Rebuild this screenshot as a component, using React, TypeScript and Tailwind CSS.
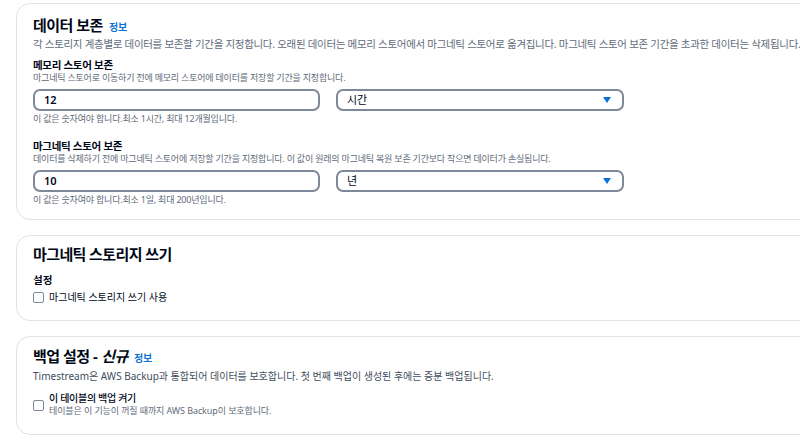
const font = "[font-family:'Noto_Sans','Noto_Sans_CJK_KR',sans-serif]";

function InfoLink() {
  return <span className="ml-[6px] text-[10px] font-bold tracking-normal text-[#0972d3]">정보</span>;
}

function Field({
  label,
  desc,
  value,
  unit,
  hint,
}: {
  label: string;
  desc: string;
  value: string;
  unit: string;
  hint: string;
}) {
  return (
    <div className="flex flex-col">
      <div className="text-[10.5px] font-bold leading-[14px] tracking-[-0.3px] text-[#000716]">{label}</div>
      <div className="whitespace-nowrap text-[9px] leading-[12px] tracking-[-0.2px] text-[#5f6b7a]">{desc}</div>
      <div className="mt-[5px] flex gap-4">
        <div className="flex h-[22px] w-[287px] items-center rounded-[7px] border-2 border-[#7d8998] px-[9px] text-[11px] font-semibold text-[#000716]">
          {value}
        </div>
        <div className="flex h-[22px] w-[288px] items-center justify-between rounded-[7px] border-2 border-[#7d8998] pl-[9px] pr-[11px] text-[11px] text-[#000716]">
          <span>{unit}</span>
          <svg width="8" height="6" viewBox="0 0 8 6">
            <path d="M0 0h8L4 6z" fill="#0972d3" />
          </svg>
        </div>
      </div>
      <div className="mt-[2px] whitespace-nowrap text-[9px] leading-[12px] tracking-[-0.2px] text-[#5f6b7a]">{hint}</div>
    </div>
  );
}

function Checkbox() {
  return <span className="inline-block h-[11px] w-[11px] shrink-0 rounded-[2px] border-[1.5px] border-[#7d8998] bg-white" />;
}

export default function App() {
  return (
    <div className={`${font} [font-feature-settings:'palt'] min-h-[435px] w-[800px] overflow-hidden bg-white`}>
      <div className="flex w-[830px] flex-col gap-[15px] pl-4 pt-[3px]">
        {/* 데이터 보존 */}
        <section className="h-[217px] rounded-[14px] border border-[#e0e2e4] px-4 pt-[10px]">
          <h2 className="flex items-baseline text-[15px] font-bold leading-[22px] tracking-[-0.5px] text-[#000716]">
            데이터 보존
            <InfoLink />
          </h2>
          <p className="whitespace-nowrap text-[10.5px] leading-[12px] tracking-[-0.3px] text-[#5f6b7a]">
            각 스토리지 계층별로 데이터를 보존할 기간을 지정합니다. 오래된 데이터는 메모리 스토어에서 마그네틱 스토어로 옮겨집니다. 마그네틱 스토어 보존 기간을 초과한 데이터는 삭제됩니다.
          </p>
          <div className="mt-[8px] flex flex-col gap-[14px]">
            <Field
              label="메모리 스토어 보존"
              desc="마그네틱 스토어로 이동하기 전에 메모리 스토어에 데이터를 저장할 기간을 지정합니다."
              value="12"
              unit="시간"
              hint="이 값은 숫자여야 합니다.최소 1시간, 최대 12개월입니다."
            />
            <Field
              label="마그네틱 스토어 보존"
              desc="데이터를 삭제하기 전에 마그네틱 스토어에 저장할 기간을 지정합니다. 이 값이 원래의 마그네틱 복원 보존 기간보다 작으면 데이터가 손실됩니다."
              value="10"
              unit="년"
              hint="이 값은 숫자여야 합니다.최소 1일, 최대 200년입니다."
            />
          </div>
        </section>

        {/* 마그네틱 스토리지 쓰기 */}
        <section className="h-[86px] rounded-[14px] border border-[#e0e2e4] px-4 pt-[7px]">
          <h2 className="text-[15px] font-bold leading-[22px] tracking-[-0.6px] text-[#000716]">마그네틱 스토리지 쓰기</h2>
          <div className="mt-[8px] text-[10.5px] font-bold leading-[14px] text-[#000716]">설정</div>
          <label className="mt-[3px] flex items-center gap-[5px] text-[10px] leading-[14px] text-[#000716]">
            <Checkbox />
            마그네틱 스토리지 쓰기 사용
          </label>
        </section>

        {/* 백업 설정 */}
        <section className="h-[99px] rounded-[14px] border border-[#e0e2e4] px-4 pt-[8px]">
          <h2 className="flex items-baseline text-[15px] font-bold leading-[22px] tracking-[-0.5px] text-[#000716]">
            백업 설정 - <i className="ml-1">신규</i>
            <InfoLink />
          </h2>
          <p className="whitespace-nowrap text-[10px] leading-[14px] tracking-[0px] text-[#414d5c]">
            Timestream은 AWS Backup과 통합되어 데이터를 보호합니다. 첫 번째 백업이 생성된 후에는 증분 백업됩니다.
          </p>
          <div className="mt-[8px] flex gap-[5px]">
            <div className="pt-[2px]">
              <Checkbox />
            </div>
            <div className="flex flex-col">
              <span className="text-[10px] font-medium leading-[14px] tracking-[-0.3px] text-[#000716]">이 테이블의 백업 켜기</span>
              <span className="whitespace-nowrap text-[9px] leading-[12px] tracking-[-0.1px] text-[#5f6b7a]">테이블은 이 기능이 꺼질 때까지 AWS Backup이 보호합니다.</span>
            </div>
          </div>
        </section>
      </div>
    </div>
  );
}
